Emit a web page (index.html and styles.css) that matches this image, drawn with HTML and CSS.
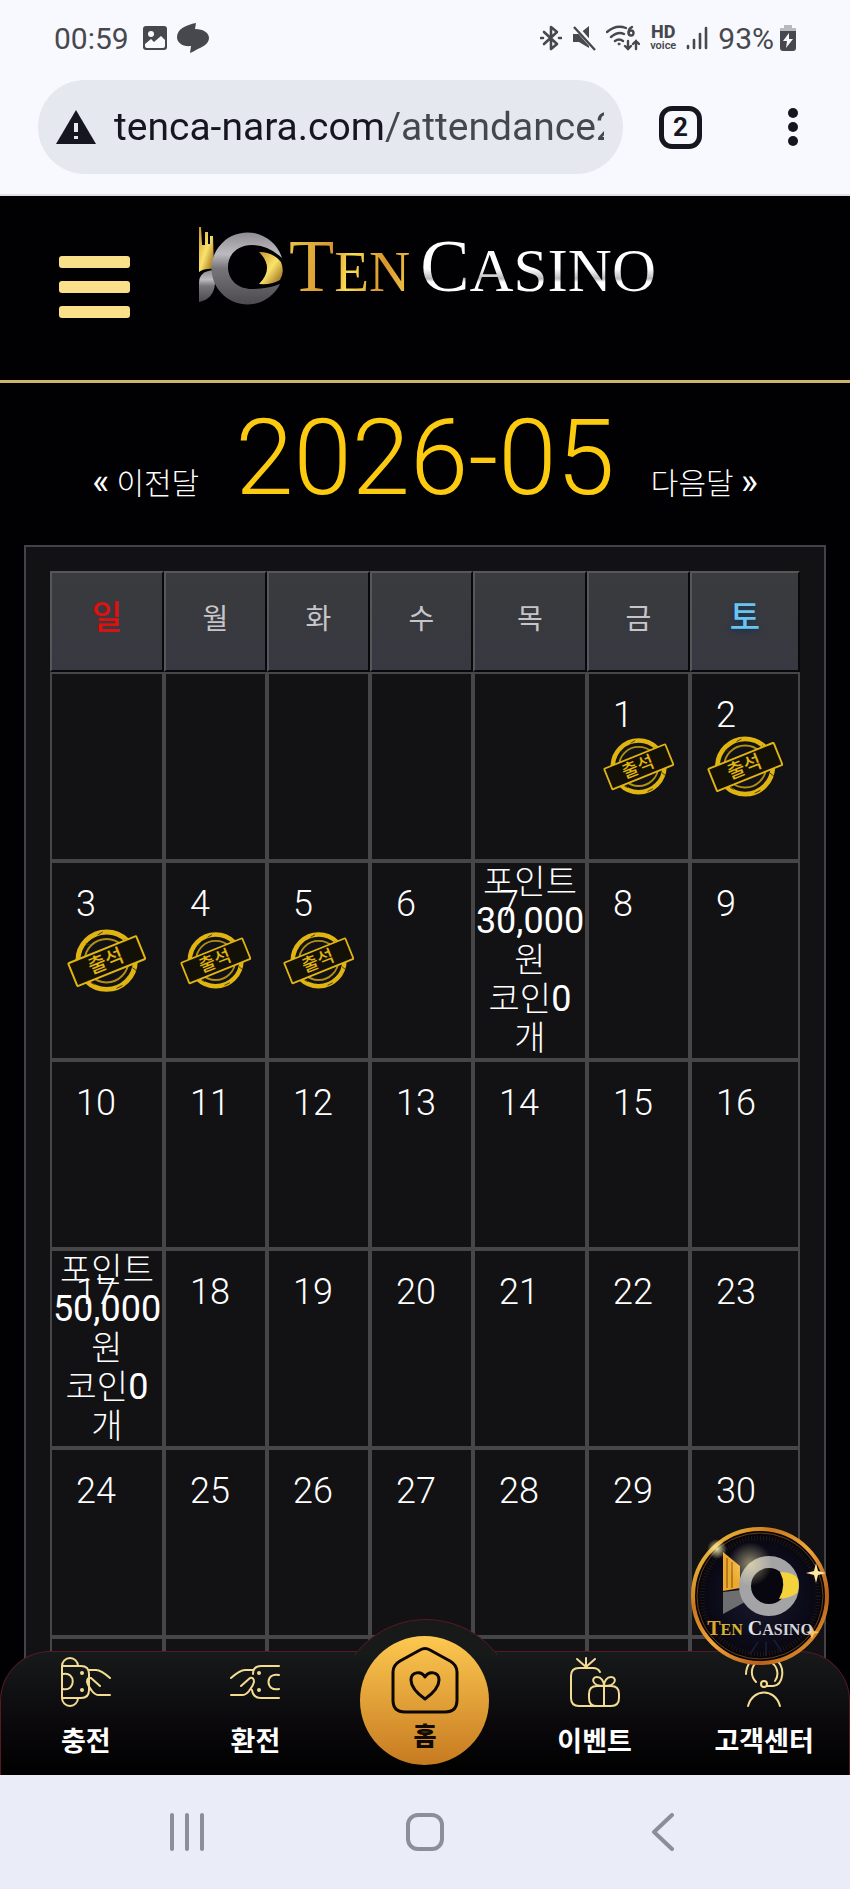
FILE: index.html
```html
<!DOCTYPE html>
<html lang="ko">
<head>
    <meta charset="UTF-8">
    <meta name="viewport" content="width=device-width, initial-scale=1.0">
    <title>Ten Casino</title>
    <link rel="stylesheet" href="styles.css">
</head>
<body>
    <!-- shared shapes -->
    <svg class="defs" width="0" height="0" aria-hidden="true">
        <defs>
            <linearGradient id="silver" x1="0" y1="0" x2="0" y2="1">
                <stop offset="0" stop-color="#8f8d92"/>
                <stop offset="0.3" stop-color="#bdbbc0"/>
                <stop offset="0.5" stop-color="#77757a"/>
                <stop offset="1" stop-color="#4c4a4f"/>
            </linearGradient>
            <linearGradient id="gold" x1="0" y1="0" x2="1" y2="1">
                <stop offset="0" stop-color="#c8962c"/>
                <stop offset="0.5" stop-color="#fbe36a"/>
                <stop offset="1" stop-color="#8a5a14"/>
            </linearGradient>
            <linearGradient id="ring" x1="0" y1="0" x2="1" y2="1">
                <stop offset="0" stop-color="#ffe24a"/>
                <stop offset="0.3" stop-color="#c9771c"/>
                <stop offset="0.5" stop-color="#f2a53a"/>
                <stop offset="0.75" stop-color="#b8611a"/>
                <stop offset="1" stop-color="#f7b53c"/>
            </linearGradient>
            <radialGradient id="night">
                <stop offset="0" stop-color="#1b1a30"/>
                <stop offset="0.7" stop-color="#0b0a18"/>
                <stop offset="1" stop-color="#050409"/>
            </radialGradient>
            <radialGradient id="glow">
                <stop offset="0" stop-color="#fff3b0" stop-opacity="0.9"/>
                <stop offset="1" stop-color="#fff3b0" stop-opacity="0"/>
            </radialGradient>
            <symbol id="mark" viewBox="0 0 86 80">
                <path fill="url(#gold)" d="M1 1h2l1 18h3V6h3v12h2V10h3l1 33Q7 42 1 46z"/>
                <path fill="url(#silver)" d="M16 44Q1 45 1 57v19q15-3 16-19z"/>
                <path fill="url(#silver)" fill-rule="evenodd" d="M84 32A36 36 0 1 0 82 58Q70 63 54 63C40 63 30 54 30 41S40 19 54 19Q70 19 84 32z"/>
                <path fill="url(#gold)" d="M61 26Q75 26 83 36Q87 46 82 54Q74 59 61 58Q77 42 61 26z"/>
            </symbol>
            <symbol id="stamp" viewBox="0 0 80 66">
                <circle cx="40" cy="33" r="29" fill="none" stroke="#e0b512" stroke-width="5"/>
                <circle cx="40" cy="33" r="22" fill="none" stroke="#b08f14" stroke-width="2"/>
                <path d="M19 16l4 1M31 7l5-3M58 11l5 5M24 55l4 2M50 61l6-3M66 40l4 3" stroke="#3a3008" stroke-width="1"/>
                <g transform="rotate(-22 40 33)">
                    <rect x="3" y="21" width="74" height="25" rx="1" fill="#131007" stroke="#e0b512" stroke-width="2"/>
                    <text x="39" y="40" text-anchor="middle" class="stamp-text">출석</text>
                </g>
            </symbol>
        </defs>
    </svg>

    <header class="browser">
        <div class="status">
            <span class="clock">00:59</span>
            <svg width="24" height="24" viewBox="0 0 24 24"><rect width="24" height="24" rx="3" fill="#47484d"/><circle cx="8" cy="8" r="3" fill="#f8f9fe"/><path d="M2 18l6-5 3 3 7-6 4 4v6q0 2-2 2H4q-2 0-2-2z" fill="#f8f9fe"/></svg>
            <svg width="32" height="30" viewBox="0 0 32 30"><path d="M19 0l-1 6c9 0 14 4 14 9 0 6-7 9-13 12q-3 2-6 3l1-7C6 24 0 20 0 14 0 6 9 2 19 0z" fill="#47484d"/></svg>
            <div class="status-right">
                <svg width="22" height="26" viewBox="0 0 22 26" fill="none" stroke="#47484d" stroke-width="2.6" stroke-linejoin="round" stroke-linecap="round"><path d="M4 7l13 12-6 5V2l6 5L4 19"/><path d="M1 13h2M19 13h2"/></svg>
                <svg width="24" height="26" viewBox="0 0 24 26"><path d="M1 9h6l10-8v22L7 17H1z" fill="#47484d"/><path d="M2 0l22 25" stroke="#f8f9fe" stroke-width="5"/><path d="M2 2l21 23" stroke="#47484d" stroke-width="2.4"/></svg>
                <svg width="34" height="26" viewBox="0 0 34 26" fill="none" stroke="#47484d" stroke-width="2.4" stroke-linecap="round"><path d="M1 7Q10-1 20 3M5 12q7-6 13-3M9 16q4-3 8 0"/><circle cx="13" cy="19" r="1" fill="#47484d" stroke-width="1"/><path d="M26 2q-4 2-3 6M22 24v-8m-3 5l3 3 3-3M30 16v8m-3-5l3-3 3 3"/><circle cx="25" cy="8" r="2.5"/></svg>
                <span class="hd"><b>HD</b>voice</span>
                <svg width="22" height="24" viewBox="0 0 22 24" stroke="#47484d" stroke-width="2.6" stroke-linecap="round"><path d="M2 20v2M8 14v8M14 8v14M20 2v20"/></svg>
                <span class="percent">93%</span>
                <svg width="16" height="26" viewBox="0 0 16 26"><path d="M4 0h8v3h4v4H0V3h4z" fill="#b9babf"/><path d="M0 6h16v17q0 3-3 3H3q-3 0-3-3z" fill="#47484d"/><path d="M9 8l-6 8h4l-1 7 7-9H9z" fill="#f8f9fe"/></svg>
            </div>
        </div>
        <div class="toolbar">
            <label class="omnibox">
                <svg width="40" height="34" viewBox="0 0 40 34"><path d="M20 0l20 34H0z" fill="#15161f"/><path d="M20 13v9M20 26v3" stroke="#e6e8f0" stroke-width="4"/></svg>
                <input type="text" class="url" value="tenca-nara.com/attendance2" aria-label="URL" readonly>
            </label>
            <button class="tabs">2</button>
            <button class="more" aria-label="메뉴"><i></i><i></i><i></i></button>
        </div>
    </header>

    <main class="page">
        <header class="site-header">
            <button class="menu" aria-label="메뉴"><i></i><i></i><i></i></button>
            <a class="logo" href="#">
                <svg width="86" height="80"><use href="#mark"/></svg>
                <span class="ten"><b>T</b>EN</span>
                <span class="casino"><b>C</b>ASINO</span>
            </a>
        </header>

        <div class="month">
            <a href="#"><b>«</b> 이전달</a>
            <h1>2026-05</h1>
            <a href="#">다음달 <b>»</b></a>
        </div>

        <div class="calendar">
            <table>
                <colgroup>
                    <col class="wide"><col class="day-col"><col class="day-col"><col class="day-col"><col class="wide"><col class="day-col"><col class="sat-col">
                </colgroup>
                <thead>
                    <tr><th class="sun">일</th><th>월</th><th>화</th><th>수</th><th>목</th><th>금</th><th class="sat">토</th></tr>
                </thead>
                <tbody>
                    <tr>
                        <td></td><td></td><td></td><td></td><td></td>
                        <td><span class="day">1</span><svg class="stamp" viewBox="0 0 80 66"><use href="#stamp"/></svg></td>
                        <td><span class="day">2</span><svg class="stamp" viewBox="0 0 80 66"><use href="#stamp"/></svg></td>
                    </tr>
                    <tr>
                        <td><span class="day">3</span><svg class="stamp" viewBox="0 0 80 66"><use href="#stamp"/></svg></td>
                        <td><span class="day">4</span><svg class="stamp" viewBox="0 0 80 66"><use href="#stamp"/></svg></td>
                        <td><span class="day">5</span><svg class="stamp" viewBox="0 0 80 66"><use href="#stamp"/></svg></td>
                        <td><span class="day">6</span></td>
                        <td><span class="day">7</span><p class="point">포인트<br><b>30,000</b><br>원<br>코인<b>0</b><br>개</p></td>
                        <td><span class="day">8</span></td>
                        <td><span class="day">9</span></td>
                    </tr>
                    <tr>
                        <td><span class="day">10</span></td>
                        <td><span class="day">11</span></td>
                        <td><span class="day">12</span></td>
                        <td><span class="day">13</span></td>
                        <td><span class="day">14</span></td>
                        <td><span class="day">15</span></td>
                        <td><span class="day">16</span></td>
                    </tr>
                    <tr>
                        <td><span class="day">17</span><p class="point">포인트<br><b>50,000</b><br>원<br>코인<b>0</b><br>개</p></td>
                        <td><span class="day">18</span></td>
                        <td><span class="day">19</span></td>
                        <td><span class="day">20</span></td>
                        <td><span class="day">21</span></td>
                        <td><span class="day">22</span></td>
                        <td><span class="day">23</span></td>
                    </tr>
                    <tr>
                        <td><span class="day">24</span></td>
                        <td><span class="day">25</span></td>
                        <td><span class="day">26</span></td>
                        <td><span class="day">27</span></td>
                        <td><span class="day">28</span></td>
                        <td><span class="day">29</span></td>
                        <td><span class="day">30</span></td>
                    </tr>
                    <tr><td></td><td></td><td></td><td></td><td></td><td></td><td></td></tr>
                </tbody>
            </table>
        </div>

        <nav class="dock">
            <a href="#">
                <svg width="50" height="50" viewBox="0 0 50 50"><path d="M1 41V9a8 8 0 0 1 16 0M1 41a8 8 0 0 0 16 0M1 9h19q8 0 8 8v16q0 8-8 8H1M2 17c13-3 13 18 0 15M28 13h7q5 0 14 8M39 29l-9-8q-4-1-4 4c1 4 3 6 5 9q3 4 7 4h11"/><circle cx="21" cy="16" r="1"/><circle cx="21" cy="33" r="1"/></svg>
                <span>충전</span>
            </a>
            <a href="#">
                <svg width="50" height="50" viewBox="0 0 50 50"><path d="M49 9H31q-8 0-8 8M49 41H31q-8 0-9-8M49 18c-14-3-14 17 0 14M23 13h-8q-5 0-14 8M11 29l9-8q4-1 4 4c-1 4-3 6-5 9q-3 4-7 4H1"/><circle cx="29" cy="16" r="1"/><circle cx="29" cy="33" r="1"/></svg>
                <span>환전</span>
            </a>
            <a href="#" class="home">
                <svg width="66" height="66" viewBox="0 0 66 66"><path d="M28 3q5-3 10 0l20 11q7 4 7 11v28q0 12-12 12H13Q1 65 1 53V25q0-7 7-11z"/><path d="M33 30c-4-7-14-5-14 3 0 7 7 14 14 19 7-5 14-12 14-19 0-8-10-10-14-3z"/></svg>
                <span>홈</span>
            </a>
            <a href="#">
                <svg width="50" height="50" viewBox="0 0 50 50"><path d="M16 1v9M7 2l9 8 9-8M30 15q-2-4-7-4H9q-8 0-8 8v22q0 8 8 8h32q8 0 8-8v-4q0-8-8-8H27q-8 0-8 8v4q0 8 7 8M34 29v19M34 29c-13 0-13-9-7-9 4 0 7 4 7 9 0-5 3-9 7-9 6 0 6 9-7 9"/></svg>
                <span>이벤트</span>
            </a>
            <a href="#">
                <svg width="50" height="50" viewBox="0 0 50 50"><path d="M9 49c5-18 27-18 32 0M28 29h6c11-1 12-19 4-25M36 24c4-5 3-14-3-18M17 25c-6-6-5-15 0-19M7 17Q7 11 11 5"/><circle cx="25" cy="27" r="3"/></svg>
                <span>고객센터</span>
            </a>
        </nav>

        <a class="badge" href="#" aria-label="Ten Casino">
            <svg width="140" height="140" viewBox="0 0 140 140">
                <circle cx="70" cy="70" r="68" fill="url(#night)"/>
                <circle cx="70" cy="70" r="67" fill="none" stroke="url(#ring)" stroke-width="4"/>
                <circle cx="70" cy="70" r="63" fill="none" stroke="#6b3d14" stroke-width="1"/>
                <circle cx="70" cy="70" r="58" fill="none" stroke="#1c1916" stroke-width="5" stroke-dasharray="1 2"/>
                <path d="M33 26l17 14v22l-17 3z" fill="#eda92c"/>
                <path d="M37 32v30M42 36v26" stroke="#7a4d10" stroke-width="1"/>
                <path d="M33 66l18-2 4 12-22 12z" fill="#6e6e70"/>
                <circle cx="79" cy="60" r="24" fill="#08070f" stroke="#a4a4a6" stroke-width="12"/>
                <path d="M90 46q14 0 18 7 2 8-1 14-6 5-18 6 8-14 1-27z" fill="#f4d33c"/>
                <circle cx="60" cy="38" r="22" fill="url(#glow)" opacity="0.6"/>
                <circle cx="27" cy="23" r="10" fill="url(#glow)"/>
                <path d="M126 37l2 8 8 2-8 2-2 8-2-8-8-2 8-2z" fill="#ffe9a0"/>
                <path d="M122 101l2 4 5 1-5 2-2 5-2-5-4-2 4-1z" fill="#ffc060"/>
                <path d="M68 116l-8 12M76 116v14M84 114l8 12" stroke="#1a1930" stroke-width="2"/>
                <text x="70" y="109" text-anchor="middle" class="badge-text"><tspan fill="#e0a52c" class="cap">T</tspan><tspan fill="#d8b52c">EN</tspan><tspan fill="#e4e4e8" class="cap"> C</tspan><tspan fill="#d4d4d8">ASINO</tspan></text>
            </svg>
        </a>
    </main>

    <footer class="system">
        <button aria-label="최근 앱"><svg width="36" height="38" viewBox="0 0 36 38"><path d="M3 2v34M18 2v34M33 2v34"/></svg></button>
        <button aria-label="홈"><svg width="38" height="38" viewBox="0 0 38 38"><rect x="2" y="2" width="34" height="34" rx="10"/></svg></button>
        <button aria-label="뒤로"><svg width="38" height="38" viewBox="0 0 38 38"><path d="M28 2L10 19l18 17"/></svg></button>
    </footer>
</body>
</html>
```
FILE: styles.css
```css
* { box-sizing: border-box; }
body {
    margin: 0;
    height: 100vh;
    display: flex;
    flex-direction: column;
    background: #000;
    color: #fff;
    font-family: Roboto, "Noto Sans CJK KR", sans-serif;
    font-weight: 300;
}
a { color: inherit; text-decoration: none; }
button { border: 0; padding: 0; background: none; font: inherit; color: inherit; cursor: pointer; }
svg { display: block; flex: none; }
.defs { position: absolute; }

/* Browser bars */
.browser { height: 196px; background: #f8f9fe; border-bottom: 2px solid #dfe1e6; color: #47484d; }
.status { display: flex; align-items: center; gap: 10px; padding: 20px 54px 0; height: 56px; }
.clock, .percent { font-size: 30px; font-weight: 400; }
.clock { margin-right: 4px; }
.status-right { display: flex; align-items: center; gap: 10px; margin-left: auto; }
.percent { margin-right: -4px; }
.hd { font-size: 11px; line-height: 12px; font-weight: 600; text-align: center; }
.hd b { display: block; font-size: 18px; line-height: 16px; font-weight: 800; }
.toolbar { display: flex; align-items: center; padding: 24px 52px 0 38px; }
.omnibox {
    display: flex;
    align-items: center;
    gap: 18px;
    flex: 1;
    min-width: 0;
    height: 94px;
    padding: 0 19px 0 18px;
    border-radius: 47px;
    background: #e6e8f0;
}
.url {
    flex: 1;
    min-width: 0;
    padding: 0;
    border: 0;
    outline: 0;
    font: 400 39px Roboto, sans-serif;
    color: transparent;
    background: linear-gradient(90deg, #15161f 272px, #44474b 272px);
    -webkit-background-clip: text;
    background-clip: text;
}
.tabs {
    flex: none;
    width: 43px;
    height: 43px;
    margin: 0 86px 0 36px;
    border: 5px solid #15161f;
    border-radius: 13px;
    color: #15161f;
    font-size: 26px;
    font-weight: 700;
    line-height: 32px;
}
.more { display: grid; flex: none; gap: 4px; }
.more i { width: 10px; height: 10px; border-radius: 50%; background: #15161f; }

/* Page */
.page { position: relative; flex: 1; min-height: 0; overflow: hidden; background: #010003; }
.site-header {
    display: flex;
    align-items: flex-start;
    gap: 68px;
    height: 187px;
    padding: 30px 59px 0;
    border-bottom: 3px solid #cdb46c;
}
.menu { display: grid; gap: 13px; width: 71px; margin-top: 30px; }
.menu i { height: 12px; border-radius: 3px; background: #fbe08c; }
.logo { display: flex; align-items: baseline; font-family: "Liberation Serif", serif; font-size: 61px; font-weight: 400; line-height: 80px; }
.logo svg { align-self: flex-start; margin-right: 5px; }
.logo b { font-size: 74px; font-weight: 400; }
.ten, .casino { color: transparent; -webkit-background-clip: text; background-clip: text; }
.ten { margin-right: 10px; font-size: 57px; background-image: linear-gradient(100deg, #e8c84c, #d9952c 35%, #fbe050 50%, #d9952c 75%, #f3cf4a); }
.casino { background-image: linear-gradient(#fff 50%, #b9b9bd 62%, #fff 66%); }

.month { display: flex; justify-content: center; align-items: baseline; gap: 36px; height: 162px; }
.month h1 { margin: 0; color: #fccb10; font-size: 105px; font-weight: 300; line-height: 152px; }
.month a { font-size: 30px; }
.month b { font-size: 36px; font-weight: 400; }

.calendar { margin: 0 24px; padding: 24px; border: 2px solid #434246; background: #121114; }
table { width: 100%; table-layout: fixed; border-collapse: separate; border-spacing: 0; }
.wide { width: 114px; }
.day-col { width: 103px; }
.sat-col { width: 110px; }
th {
    height: 101px;
    padding: 0 0 9px;
    border: 2px solid;
    border-color: #56575b #08080b #08080b #56575b;
    background: linear-gradient(#393b3c, #383842);
    color: #c6c6ca;
    font-size: 28px;
    font-weight: 400;
}
.sun, .sat { padding-bottom: 13px; font-size: 33px; font-weight: 500; }
.sun { color: #e0100f; }
.sat { color: #6cc4ee; text-shadow: 0 2px 5px #10305a; }
td { position: relative; height: 189px; padding: 0; border: 2px solid #464548; text-align: center; }
/* date number sits over the stamp or the reward text */
.day { position: absolute; top: 20px; left: 24px; font-size: 36px; line-height: 42px; }
.stamp { width: 72%; margin: 0 auto; }
.stamp-text { fill: #e0b512; font-size: 20px; font-weight: 500; }
.point { margin: 0; font-size: 34px; line-height: 39px; white-space: nowrap; }
.point b { font-size: 36px; line-height: 1; font-weight: 400; }

/* Bottom menu */
.dock {
    position: absolute;
    left: 0;
    right: 0;
    bottom: 0;
    display: grid;
    grid-template-columns: repeat(5, 1fr);
    height: 124px;
    padding-top: 5px;
    border: 1px solid #571a22;
    border-bottom: 0;
    border-radius: 50px 50px 0 0;
    background: linear-gradient(#171a1a, #0a080b 60%, #000);
}
.dock::before {
    content: "";
    position: absolute;
    top: -33px;
    left: calc(50% - 89px);
    width: 178px;
    height: 178px;
    border: 1px solid #571a22;
    border-radius: 50%;
    background: #181a1a;
    clip-path: inset(0 0 144px 0);
}
.dock a { position: relative; display: flex; flex-direction: column; align-items: center; gap: 17px; font-size: 27px; line-height: 36px; font-weight: 700; }
.dock svg { fill: none; stroke: #f3dc92; stroke-width: 2; stroke-linecap: round; stroke-linejoin: round; }
.dock .home {
    justify-self: center;
    width: 129px;
    height: 129px;
    margin-top: -21px;
    padding-top: 11px;
    gap: 6px;
    border-radius: 50%;
    background: linear-gradient(#fdc850, #c67a20);
    color: #120b04;
    font-size: 25px;
    font-weight: 800;
}
.dock .home svg { overflow: visible; stroke: #0c0602; stroke-width: 3; }

.badge { position: absolute; right: 20px; bottom: 109px; }
.badge-text { font-family: "Liberation Serif", serif; font-size: 16px; font-weight: 700; }
.badge-text .cap { font-size: 20px; }

.system { display: grid; grid-template-columns: repeat(3, 1fr); height: 114px; padding: 0 68px; background: #eaedf8; }
.system button { display: grid; place-items: center; }
.system svg { fill: none; stroke: #8b8f99; stroke-width: 4; stroke-linecap: round; stroke-linejoin: round; }
```
